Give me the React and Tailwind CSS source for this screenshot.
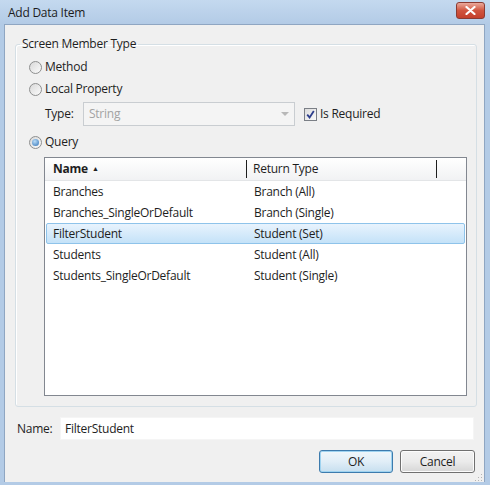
import React from "react";

const rows = [
  { name: "Branches", type: "Branch (All)" },
  { name: "Branches_SingleOrDefault", type: "Branch (Single)" },
  { name: "FilterStudent", type: "Student (Set)", selected: true },
  { name: "Students", type: "Student (All)" },
  { name: "Students_SingleOrDefault", type: "Student (Single)" },
];

function Radio({ checked, label }) {
  return (
    <div className="flex items-center h-[22px] gap-[3px]">
      <span className="w-[13px] h-[13px] rounded-full border border-[#8e8f8f] bg-gradient-to-br from-[#d9d9d9] to-[#fbfbfb] flex items-center justify-center">
        {checked && (
          <span className="w-[7px] h-[7px] rounded-full bg-[radial-gradient(circle_at_40%_35%,#b9dcf8,#2f71b5)]" />
        )}
      </span>
      <span>{label}</span>
    </div>
  );
}

export default function App() {
  return (
    <div
      className="w-[490px] h-[485px] flex flex-col bg-[#b3cbe6] text-[12px] tracking-[-0.25px] text-[#1e1e1e]"
      style={{ fontFamily: '"Open Sans", "Noto Sans", sans-serif' }}
    >
      {/* Title bar */}
      <div className="h-[24px] flex items-center justify-between pl-[8px] pr-[5px] bg-gradient-to-b from-[#c4d9ef] to-[#b3cbe6]">
        <span className="text-[12px] text-[#1c1c1c] mt-[1px]">Add Data Item</span>
        <button className="w-[29px] h-[17px] mt-[-3px] rounded-[3px] border border-[#8b3b32] bg-gradient-to-b from-[#e9a99c] via-[#d0553f] to-[#c4402c] flex items-center justify-center">
          <svg width="11" height="9" viewBox="0 0 11 9">
            <path d="M1.5 1 L9.5 8 M9.5 1 L1.5 8" stroke="#fff" strokeWidth="2.2" strokeLinecap="round" />
          </svg>
        </button>
      </div>

      <div className="flex flex-1">
        <div className="w-[5px] border-r border-[#8fa6c2]" />
        {/* Client area */}
        <div className="flex-1 bg-[#f0f0f0] border-t border-[#8fa6c2] flex flex-col">
          <fieldset className="ml-[10px] mt-[11px] w-[462px] h-[371px] border border-[#d5dfe5] rounded-[3px] shadow-[inset_1px_1px_0_#fff]">
            <legend className="ml-[4px] px-[2px] leading-[16px]">Screen Member Type</legend>
            <div className="pl-[13px] pt-[4px]">
              <Radio label="Method" />
              <Radio label="Local Property" />
              <div className="flex items-center h-[24px] mt-[2px] pl-[16px]">
                <span className="w-[38px]">Type:</span>
                <div className="w-[212px] h-[24px] border border-[#c9cdd1] bg-[#f4f4f4] flex items-center justify-between pl-[5px] pr-[5px] text-[#a3a3a3]">
                  <span>String</span>
                  <span className="w-0 h-0 border-l-[4px] border-r-[4px] border-t-[4px] border-l-transparent border-r-transparent border-t-[#b8b8b8]" />
                </div>
                <div className="flex items-center ml-[9px] gap-[3px]">
                  <span className="w-[13px] h-[13px] border border-[#7b7f86] bg-gradient-to-br from-[#dcdcdc] to-[#fafafa] flex items-center justify-center">
                    <svg width="9" height="9" viewBox="0 0 9 9">
                      <path d="M1.2 4.6 L3.6 7.4 L7.8 1" stroke="#2d3e8c" strokeWidth="1.8" fill="none" />
                    </svg>
                  </span>
                  <span>Is Required</span>
                </div>
              </div>
              <div className="mt-[5px]">
                <Radio checked label="Query" />
              </div>
            </div>

            {/* Query list */}
            <div className="ml-[28px] mt-[4px] w-[423px] h-[239px] border border-[#828790] bg-white">
              <div className="h-[23px] flex bg-gradient-to-b from-[#ffffff] to-[#f1f2f4] border-b border-[#e3e5e7]">
                <div className="w-[202px] flex items-center pl-[8px] font-bold border-r border-[#1e1e1e] my-[2px]">
                  Name
                  <span className="ml-[4px] text-[7px] font-normal">▲</span>
                </div>
                <div className="w-[190px] flex items-center pl-[6px] border-r border-[#1e1e1e] my-[2px]">
                  Return Type
                </div>
              </div>
              <div className="px-[1px]">
                {rows.map((r) => (
                  <div
                    key={r.name}
                    className={
                      r.selected
                        ? "h-[21px] flex items-center rounded-[2px] border border-[#8ec3ea] bg-gradient-to-b from-[#e8f3fd] to-[#c4e2f8]"
                        : "h-[21px] flex items-center border border-transparent"
                    }
                  >
                    <span className="w-[201px] pl-[6px]">{r.name}</span>
                    <span className="pl-[6px]">{r.type}</span>
                  </div>
                ))}
              </div>
            </div>
          </fieldset>

          {/* Name field */}
          <div className="flex items-center mt-[10px] ml-[12px] h-[23px]">
            <span className="w-[43px]">Name:</span>
            <div className="w-[414px] h-[23px] bg-white border border-[#f5f5f5] flex items-center pl-[4px]">
              FilterStudent
            </div>
          </div>

          {/* Buttons */}
          <div className="flex justify-end items-end gap-[7px] mt-[10px] mr-[9px] relative">
            <button className="w-[74px] h-[23px] rounded-[3px] border border-[#3d7bad] bg-gradient-to-b from-[#f0f7fb] via-[#e1eef7] to-[#c7dfef] shadow-[inset_0_0_0_1px_#9fd3f0]">
              OK
            </button>
            <button className="w-[75px] h-[23px] rounded-[3px] border border-[#707070] bg-gradient-to-b from-[#f2f2f2] via-[#ebebeb] to-[#d6d6d6] shadow-[inset_0_0_0_1px_#fcfcfc]">
              Cancel
            </button>
            {/* resize grip */}
            <svg className="absolute right-[-8px] bottom-[-9px]" width="10" height="10" viewBox="0 0 10 10">
              {[[8, 2], [8, 5], [5, 5], [8, 8], [5, 8], [2, 8]].map(([x, y]) => (
                <rect key={`${x}-${y}`} x={x} y={y} width="1" height="1" fill="#b4b4b4" />
              ))}
            </svg>
          </div>
        </div>
        <div className="w-[6px] border-l border-[#8fa6c2]" />
      </div>
      <div className="h-[3px]" />
    </div>
  );
}
